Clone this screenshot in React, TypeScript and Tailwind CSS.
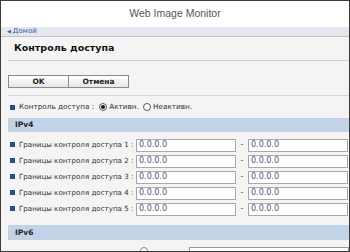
import React from "react";

const font = { fontFamily: '"DejaVu Sans", Verdana, sans-serif' };

function Bullet() {
  return <span className="inline-block w-[5px] h-[5px] bg-[#2f4a8a] mr-[4px] shrink-0" />;
}

function Radio({ checked }: { checked?: boolean }) {
  return (
    <span className="inline-flex items-center justify-center w-[8px] h-[8px] rounded-full border border-[#555] bg-white mr-[2px] shrink-0">
      {checked && <span className="w-[4px] h-[4px] rounded-full bg-[#111]" />}
    </span>
  );
}

function Input() {
  return (
    <div className="w-[100px] h-[13px] border border-[#a8a8a8] bg-white flex items-center pl-[2px] text-[8px] text-[#4b5679] leading-none">
      0.0.0.0
    </div>
  );
}

function Row({ n }: { n: number }) {
  return (
    <div className="h-[16px] flex items-center">
      <div className="w-[128px] flex items-center pl-[2px] text-[7.1px] text-[#333] whitespace-nowrap">
        <Bullet />
        <span>Границы контроля доступа {n} :</span>
      </div>
      <Input />
      <div className="w-[12px] text-center text-[8px] text-[#555]">-</div>
      <Input />
    </div>
  );
}

export default function App() {
  return (
    <div
      className="w-[350px] h-[252px] border border-[#3c3c3c] overflow-hidden bg-[#f4f4f4] flex flex-col"
      style={font}
    >
      <div className="h-[26px] bg-white flex items-center justify-center text-[10.5px] text-[#555] shrink-0" style={{ fontFamily: '"Liberation Sans", Arial, sans-serif' }}>
        Web Image Monitor
      </div>
      <div className="h-[10px] bg-[#e4e7ee] border-b border-[#c4c4c4] flex items-center pl-[6px] text-[7px] text-[#3b5aa8] leading-none shrink-0">
        <span className="text-[5px] mr-[2px]">◀</span>Домой
      </div>
      <div className="pl-[7px] flex flex-col">
        <div className="h-[24px] border-b border-[#cfcfcf] flex items-center pl-[6px] text-[9.5px] font-bold text-[#111]">
          Контроль доступа
        </div>
        <div className="pt-[14px] pb-[7px] border-b border-[#d6d6d6] flex">
          <div className="w-[61px] h-[13px] border border-[#8a8a8a] bg-gradient-to-b from-white to-[#e6e6e6] flex items-center justify-center text-[7.5px] font-bold text-[#222]">
            OK
          </div>
          <div className="w-[60px] h-[13px] border border-l-0 border-[#8a8a8a] bg-gradient-to-b from-white to-[#e6e6e6] flex items-center justify-center text-[7.5px] font-bold text-[#222]">
            Отмена
          </div>
        </div>
        <div className="h-[22px] flex items-center pl-[2px] text-[7.3px] text-[#333] whitespace-nowrap">
          <Bullet />
          <span className="mr-[5px]">Контроль доступа :</span>
          <Radio checked />
          <span className="mr-[4px]">Активн.</span>
          <Radio />
          <span>Неактивн.</span>
        </div>
        <div className="h-[14px] bg-[#c2d2e7] flex items-center pl-[7px] text-[7.5px] font-bold text-[#222]">
          IPv4
        </div>
        <div className="pt-[5px]">
          {[1, 2, 3, 4, 5].map((n) => (
            <Row key={n} n={n} />
          ))}
        </div>
        <div className="mt-[8px] h-[15px] bg-[#c2d2e7] flex items-center pl-[7px] text-[7.5px] font-bold text-[#222]">
          IPv6
        </div>
        <div className="pt-[7px] flex items-start">
          <div className="ml-[132px] w-[8px] h-[8px] rounded-full border border-[#888] bg-white" />
          <div className="ml-[41px] flex-1 h-[14px] border border-[#999] bg-white" />
        </div>
      </div>
    </div>
  );
}
